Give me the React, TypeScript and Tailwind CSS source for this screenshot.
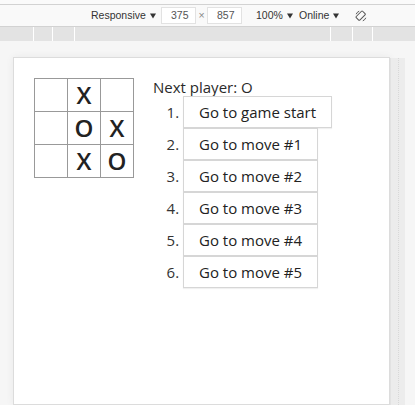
import React from 'react'

const SQUARES = [null, 'X', null, null, 'O', 'X', null, 'X', 'O']
const MOVES = ['Go to game start', 'Go to move #1', 'Go to move #2', 'Go to move #3', 'Go to move #4', 'Go to move #5']

function RotateIcon() {
  return (
    <svg width="12" height="12" viewBox="0 0 12 12" fill="none" stroke="#555" strokeWidth="1">
      <rect x="3" y="1.5" width="5" height="9" rx="0.8" transform="rotate(45 6 6)" />
      <path d="M1.2 4.2 A5 5 0 0 1 4.2 1.2" />
      <path d="M10.8 7.8 A5 5 0 0 1 7.8 10.8" />
    </svg>
  )
}

function Caret() {
  return (
    <svg className="ml-[4px]" width="6" height="6" viewBox="0 0 6 6">
      <path d="M0 0.5 H6 L3 5.5 Z" fill="#333" />
    </svg>
  )
}

function Toolbar() {
  return (
    <div className="font-['Liberation_Sans','Open_Sans',sans-serif] text-[10.5px] text-[#333]">
      <div className="h-[4px] bg-[#fafafa]" />
      <div className="h-[23px] flex items-center bg-[#f9f9f9] border-y border-[#d2d2d2] pl-[91px] whitespace-nowrap">
        <span className="w-[70px] shrink-0 flex items-center">Responsive<Caret /></span>
        <div className="w-[35px] shrink-0 h-[17px] bg-white border border-[#e2e2e2] flex items-center pl-[9px] text-[#555]">375</div>
        <span className="w-[11px] shrink-0 text-center text-[#888]">×</span>
        <div className="w-[35px] shrink-0 h-[17px] bg-white border border-[#e2e2e2] flex items-center pl-[9px] text-[#555]">857</div>
        <span className="ml-[14px] w-[43px] shrink-0 flex items-center">100%<Caret /></span>
        <span className="w-[56px] shrink-0 flex items-center">Online<Caret /></span>
        <span className="flex items-center"><RotateIcon /></span>
      </div>
      <div className="h-[14px] bg-[#e3e3e3] flex">
        <div className="w-[33px]" />
        <div className="w-[19px] border-l border-white" />
        <div className="w-[22px] border-l border-white" />
        <div className="flex-1 border-l border-white" />
        <div className="w-[22px] border-l border-white" />
        <div className="w-[20px] border-l border-white" />
        <div className="w-[43px] border-l border-white" />
      </div>
    </div>
  )
}

function Board() {
  return (
    <div className="flex flex-col w-[99px] pt-px">
      {[0, 1, 2].map((r) => (
        <div key={r} className="flex">
          {[0, 1, 2].map((c) => (
            <div
              key={c}
              className="w-[34px] h-[34px] -mr-px -mt-px border border-[#999] bg-white flex items-center justify-center text-[24px] font-semibold leading-none text-[#222]"
            >
              {SQUARES[r * 3 + c]}
            </div>
          ))}
        </div>
      ))}
    </div>
  )
}

export default function App() {
  return (
    <div className="w-[415px] h-[405px] overflow-hidden bg-[#f6f6f6] flex flex-col">
      <Toolbar />
      <div className="flex-1 flex pt-[16px]">
        <div className="ml-[13px] w-[377px] bg-white border border-[#dcdcdc] shadow-[0_0_8px_rgba(0,0,0,0.06)] p-[20px] flex font-['Century_Gothic','Open_Sans',sans-serif] text-[14px] text-[#222]">
          <Board />
          <div className="ml-[20px]">
            <div className="h-[18px] leading-[18px] text-[15px] text-[#2a2a2a]">Next player: O</div>
            <ol className="list-decimal pl-[30px] text-[#333] text-[15px]">
              {MOVES.map((m) => (
                <li key={m}>
                  <button className="h-[32px] px-[15px] bg-white border border-[#d6d6d6] text-[#222] shadow-[0_1px_1px_rgba(0,0,0,0.06)]">
                    {m}
                  </button>
                </li>
              ))}
            </ol>
          </div>
        </div>
        <div className="w-[15px] mt-[1px] bg-[#ececec] border-l border-[#e2e2e2] flex justify-center">
          <div className="w-px border-l border-dotted border-[#d8d8d8]" />
        </div>
      </div>
    </div>
  )
}
